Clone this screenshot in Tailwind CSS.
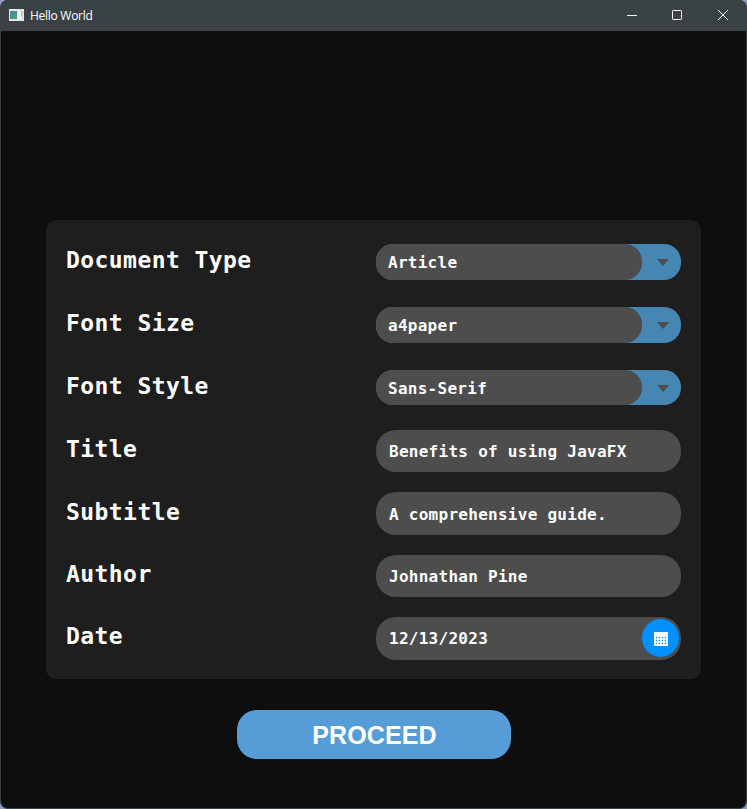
<!DOCTYPE html>
<html lang="en">
<head>
<meta charset="utf-8">
<title>Hello World</title>
<script src="https://cdn.jsdelivr.net/npm/@tailwindcss/browser@4"></script>
</head>
<body class="w-[747px] h-[809px] overflow-hidden bg-[#8a9cc0]">
<div class="w-[747px] h-[809px] flex flex-col rounded-lg overflow-hidden border border-t-0 border-[#3a4144] bg-[#0e0e0e] text-white">
  <header class="h-[31px] shrink-0 flex items-center bg-[#3b4245] pl-2 font-['Open_Sans',sans-serif]">
    <svg class="w-[15px] h-[12px] shrink-0 mb-px" viewBox="0 0 15 12">
      <defs><linearGradient id="g" x1="0" y1="0" x2="1" y2="1"><stop offset="0" stop-color="#4a7da8"/><stop offset="1" stop-color="#4fa77c"/></linearGradient></defs>
      <rect width="15" height="12" fill="#e4e8e8"/>
      <rect x="1" y="2" width="7" height="8" fill="url(#g)"/>
      <rect x="9" y="2" width="3" height="8" fill="#f6f6f4"/>
      <rect x="12" y="2" width="1" height="5" fill="#a9c4bd"/>
      <rect x="13" y="2" width="1" height="8" fill="#c9d0d2"/>
    </svg>
    <span class="ml-1.5 text-[12px] leading-[31px] tracking-[-0.27px]">Hello World</span>
    <div class="ml-auto flex">
      <svg class="w-[46px] h-[31px]" viewBox="0 0 46 31"><path d="M19 15.5h10" stroke="#fff"/></svg>
      <svg class="w-[46px] h-[31px]" viewBox="0 0 46 31"><rect x="18.5" y="10.5" width="9" height="9" rx=".7" fill="none" stroke="#fff"/></svg>
      <svg class="w-[46px] h-[31px]" viewBox="0 0 46 31"><path d="M18 10l10 10M28 10l-10 10" stroke="#fff"/></svg>
    </div>
  </header>
  <main class="flex-1 flex flex-col items-center pt-[189px]">
    <section class="w-[655px] h-[459px] shrink-0 rounded-[10px] bg-[#1e1e1e] pl-5 pr-5 pt-2.5 font-['DejaVu_Sans_Mono',monospace] font-bold text-[16px] tracking-[0.27px]">
      <div class="h-[63px] flex items-start justify-between">
        <span class="text-[23px] leading-[60px] tracking-[0.43px]">Document Type</span>
        <div class="mt-3.5 w-[305px] h-9 rounded-[17px] bg-[#4686b3] flex overflow-hidden">
          <div class="w-[266px] rounded-[17px] bg-[#4d4d4d] pl-3 leading-[37px]">Article</div>
          <svg class="w-[39px] h-9" viewBox="0 0 39 36"><path d="M15 15h12l-6 7z" fill="#4d4d4d"/></svg>
        </div>
      </div>
      <div class="h-[63px] flex items-start justify-between">
        <span class="text-[23px] leading-[60px] tracking-[0.43px]">Font Size</span>
        <div class="mt-3.5 w-[305px] h-9 rounded-[17px] bg-[#4686b3] flex overflow-hidden">
          <div class="w-[266px] rounded-[17px] bg-[#4d4d4d] pl-3 leading-[37px]">a4paper</div>
          <svg class="w-[39px] h-9" viewBox="0 0 39 36"><path d="M15 15h12l-6 7z" fill="#4d4d4d"/></svg>
        </div>
      </div>
      <div class="h-[63px] flex items-start justify-between">
        <span class="text-[23px] leading-[60px] tracking-[0.43px]">Font Style</span>
        <div class="mt-3.5 w-[305px] h-[35px] rounded-[17px] bg-[#4686b3] flex overflow-hidden">
          <div class="w-[266px] rounded-[17px] bg-[#4d4d4d] pl-3 leading-[37px]">Sans-Serif</div>
          <svg class="w-[39px] h-9" viewBox="0 0 39 36"><path d="M15 15h12l-6 7z" fill="#4d4d4d"/></svg>
        </div>
      </div>
      <div class="h-[63px] flex items-start justify-between">
        <span class="text-[23px] leading-[60px] tracking-[0.43px]">Title</span>
        <div class="mt-[11px] w-[305px] h-[42px] rounded-[20px] bg-[#4d4d4d] pl-[13px] leading-[43px]">Benefits of using JavaFX</div>
      </div>
      <div class="h-[62px] flex items-start justify-between">
        <span class="text-[23px] leading-[60px] tracking-[0.43px]">Subtitle</span>
        <div class="mt-2.5 w-[305px] h-[43px] rounded-[20px] bg-[#4d4d4d] pl-[13px] leading-[45px]">A comprehensive guide.</div>
      </div>
      <div class="h-[62px] flex items-start justify-between">
        <span class="text-[23px] leading-[60px] tracking-[0.43px]">Author</span>
        <div class="mt-[11px] w-[305px] h-[42px] rounded-[20px] bg-[#4d4d4d] pl-[13px] leading-[43px]">Johnathan Pine</div>
      </div>
      <div class="h-[62px] flex items-start justify-between">
        <span class="text-[23px] leading-[60px] tracking-[0.43px]">Date</span>
        <div class="mt-[11px] w-[305px] h-[43px] rounded-[20px] bg-[#4d4d4d] pl-[13px] pr-0.5 leading-[43px] flex justify-between">
          <span>12/13/2023</span>
          <div class="mt-0.5 w-[37px] h-[38px] rounded-full bg-[#0090ff]">
            <svg class="w-[37px] h-[38px]" viewBox="0 0 37 38">
              <rect x="12" y="13" width="14" height="14" fill="#fff"/>
              <path d="M13 18.5h12M13 21.5h12M13 24.5h12M14.5 17v9M17.5 17v9M20.5 17v9M23.5 17v9" stroke="#0090ff" stroke-opacity=".2" fill="none"/>
              <path d="M14 18.5h10M14 21.5h10M14 24.5h10" stroke="#0090ff" stroke-dasharray="1 2"/>
            </svg>
          </div>
        </div>
      </div>
    </section>
    <button class="mt-[31px] w-[274px] h-[49px] shrink-0 rounded-[20px] bg-[#569cd6] pl-0.5 font-['Liberation_Sans',Arial,sans-serif] font-bold text-[25px] leading-[51px] tracking-[0.1px]">PROCEED</button>
  </main>
</div>
</body>
</html>
